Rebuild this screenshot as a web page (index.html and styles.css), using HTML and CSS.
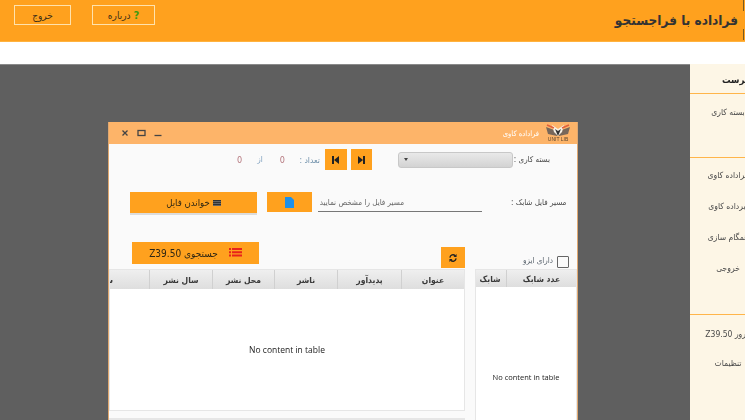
FILE: index.html
```html
<!DOCTYPE html>
<html lang="fa">
<head>
<meta charset="utf-8">
<title>فراداده با فراجستجو</title>
<link rel="stylesheet" href="styles.css">
</head>
<body>
<div class="page">
  <header class="header">
    <div class="header-actions">
      <button class="ghost-btn exit-btn">خروج</button>
      <button class="ghost-btn about-btn"><span class="q">?</span> درباره</button>
    </div>
    <div class="header-right">
      <h1 class="title">فراداده با فراجستجو</h1>
      <span class="edge"></span>
    </div>
  </header>
  <div class="strip"></div>
  <main class="main">
    <div class="desktop">
      <section class="window">
        <div class="titlebar">
          <div class="win-controls">
            <svg width="8" height="8" viewBox="0 0 8 8"><path d="M1.5 1.5l5 5M6.5 1.5l-5 5" stroke="#444" stroke-width="1.3"/></svg>
            <svg width="9" height="8" viewBox="0 0 9 8"><rect x="1" y="1.5" width="7" height="5" fill="none" stroke="#444" stroke-width="1.3"/></svg>
            <svg width="8" height="8" viewBox="0 0 8 8"><path d="M0.5 6.5h7" stroke="#444" stroke-width="1.3"/></svg>
          </div>
          <div class="win-title">
            <span>فراداده کاوی</span>
            <div class="logo">
              <svg width="24" height="13" viewBox="0 0 24 13"><path d="M0 3l11 4v5L2 10z" fill="#77675a"/><path d="M24 3l-11 4v5l9-2z" fill="#77675a"/><path d="M6 1l6 4 6-4-2 7-4 4-4-4z" fill="#f6f1e6"/><path d="M9 5l3 2 3-2-3 7z" fill="#333"/><path d="M1 1l7 3M23 1l-7 3" stroke="#e0603c" stroke-width="1.500"/></svg>
              <span class="logo-text">UNIT LIB</span>
            </div>
          </div>
        </div>
        <div class="win-body">
          <div class="row-pager">
            <span class="zero zero-a">0</span>
            <span class="lbl of">از</span>
            <span class="zero zero-b">0</span>
            <span class="lbl count">تعداد :</span>
            <button class="orange-btn pager-btn">
              <svg width="7" height="8" viewBox="0 0 7 8"><path d="M0 0h2v8H0zM7 0v8L2 4z" fill="#222"/></svg>
            </button>
            <button class="orange-btn pager-btn">
              <svg width="7" height="8" viewBox="0 0 7 8"><path d="M7 0H5v8h2zM0 0v8L5 4z" fill="#222"/></svg>
            </button>
            <div class="combo"><span class="combo-arrow"></span></div>
            <span class="lbl combo-lbl">بسته کاری :</span>
          </div>
          <div class="row-file">
            <button class="orange-btn read-btn"><span class="mini-grid"></span> خواندن فایل</button>
            <button class="orange-btn file-btn">
              <svg width="9" height="11" viewBox="0 0 9 11"><path d="M0 0h6l3 3v8H0z" fill="#1e90e8"/></svg>
            </button>
            <div class="path-input">مسیر فایل را مشخص نمایید</div>
            <span class="lbl path-lbl">مسیر فایل شابک :</span>
          </div>
          <div class="columns">
            <div class="col-main">
              <div class="col-main-tools">
                <button class="orange-btn search-btn">
                  <span class="search-text">جستجوی Z39.50</span>
                  <svg width="13" height="10" viewBox="0 0 13 10"><path d="M0 0h2v2H0zM3 0h10v2H3zM0 3.300h2v2H0zM3 3.300h10v2H3zM0 6.600h2v2H0zM3 6.600h10v2H3z" fill="#e8231a"/></svg>
                </button>
                <button class="orange-btn refresh-btn">
                  <svg width="8" height="8" viewBox="0 0 9 9"><path d="M1 4a3.500 3.500 0 0 1 6-2M8 5a3.500 3.500 0 0 1-6 2" fill="none" stroke="#222" stroke-width="1.500"/><path d="M8.500 0v3.500H5zM0.500 9V5.500H4z" fill="#222"/></svg>
                </button>
              </div>
              <div class="table table-main">
                <div class="thead">
                  <div class="th c-63">عنوان</div>
                  <div class="th c-64">پدیدآور</div>
                  <div class="th c-63">ناشر</div>
                  <div class="th c-62">محل نشر</div>
                  <div class="th c-63">سال نشر</div>
                  <div class="th c-rest">شابک</div>
                </div>
                <div class="tbody tbody-main">No content in table</div>
              </div>
              <div class="hscroll"></div>
            </div>
            <div class="col-side">
              <div class="check-row">
                <span class="check-box"></span>
                <span class="lbl">دارای ایزو</span>
              </div>
              <div class="table table-side">
                <div class="thead thead-side">
                  <div class="th c-70">عدد شابک</div>
                  <div class="th c-32">شابک</div>
                </div>
                <div class="tbody tbody-side">No content in table</div>
              </div>
            </div>
          </div>
        </div>
      </section>
    </div>
    <nav class="sidebar">
      <div class="side-group side-head"><b>فهرست</b></div>
      <div class="side-group group-a"><a>بسته کاری</a></div>
      <div class="side-group group-b">
        <a>فراداده کاوی</a><a>ابرداده کاوی</a><a>همگام سازی</a><a>خروجی</a>
      </div>
      <div class="side-group group-c">
        <a>مرور Z39.50</a><a>تنظیمات</a>
      </div>
    </nav>
  </main>
</div>
</body>
</html>
```
FILE: styles.css
```css
* { box-sizing: border-box; }
html, body { margin: 0; height: 100%; overflow: hidden; }
body { font-family: "DejaVu Sans Condensed", "DejaVu Sans", "Liberation Sans", sans-serif; background: #fff; color: #333; }
button { font-family: inherit; padding: 0; border: 0; cursor: default; }
.page { width: 745px; height: 420px; overflow: hidden; display: flex; flex-direction: column; filter: blur(0.25px); }

.header { height: 42px; flex: none; background: #ffa11e; border-bottom: 1px solid #ffb340; display: flex; justify-content: space-between; align-items: flex-start; padding: 5px 0 0 14px; }
.header-actions { display: flex; gap: 21px; }
.ghost-btn { height: 20px; background: transparent; border: 1.500px solid #ffe2ac; font-size: 10px; color: #3f3018; direction: rtl; }
.exit-btn { width: 57px; }
.about-btn { width: 63px; }
.q { color: #3f9a10; font-weight: bold; font-size: 11px; }
.header-right { display: flex; margin-top: -5px; height: 40px; }
.title { margin: 10px 5px 0 0; font-size: 13.500px; font-weight: bold; color: #333; direction: rtl; line-height: 20px; white-space: nowrap; }
.edge { width: 1px; margin-right: 1px; height: 40px; background: linear-gradient(#7a5a20 0 11px, transparent 11px 29px, #7a5a20 29px); }

.strip { height: 22px; flex: none; background: #fff; }

.main { flex: 1; display: flex; min-height: 0; }
.desktop { width: 690px; flex: none; background: #5f5f5f; position: relative; border-top: 1px solid #8a8a8a; overflow: hidden; }
.window { position: absolute; left: 108px; top: 57px; width: 470px; height: 330px; background: #fafafa; border: 1px solid #e0a870; border-top: 0; }

.titlebar { height: 22px; background: #fdb469; display: flex; justify-content: space-between; align-items: center; padding: 0 7px 0 12px; }
.win-controls { display: flex; gap: 8px; align-items: center; }
.win-title { display: flex; align-items: center; gap: 7px; font-size: 7.500px; color: #fff; direction: rtl; flex-direction: row-reverse; }
.logo { display: flex; flex-direction: column; align-items: center; width: 24px; }
.logo-text { font-family: "Liberation Sans", sans-serif; font-size: 5px; line-height: 5px; color: #5b4630; direction: ltr; white-space: nowrap; }

.win-body { display: flex; flex-direction: column; }
.lbl { font-size: 8px; color: #58626c; direction: rtl; white-space: nowrap; }
.orange-btn { background: #ffa11e; display: flex; align-items: center; justify-content: center; color: #2e2614; }

.row-pager { height: 21px; margin-top: 5px; display: flex; align-items: center; padding-left: 128px; }
.zero { font-size: 9px; color: #b5777e; }
.zero-a { margin-right: 15px; }
.of { color: #7a9cbc; margin-right: 17px; }
.zero-b { margin-right: 11px; }
.count { margin-right: 5px; color: #6f90aa; width: 24px; font-size: 8.500px; }
.pager-btn { width: 22px; height: 21px; margin-right: 4px; }
.pager-btn + .pager-btn { width: 21px; margin-right: 26px; }
.combo { width: 115px; height: 16px; border-radius: 3px; background: linear-gradient(#e9e9e9, #d3d3d3); border: 1px solid #c8c8c8; display: flex; align-items: center; padding-left: 5px; }
.combo-arrow { width: 0; height: 0; border: 2.500px solid transparent; border-top: 3px solid #444; border-bottom: 0; }
.combo-lbl { margin-left: 1px; color: #4a4a4a; }

.row-file { height: 24px; margin-top: 22px; display: flex; align-items: flex-start; padding-left: 21px; }
.read-btn { width: 127px; height: 21px; font-size: 9.500px; font-weight: normal; box-shadow: 0 2px 0 #dcdcdc; direction: rtl; gap: 3px; }
.mini-grid { width: 8px; height: 6px; background: repeating-linear-gradient(#333 0 1.500px, #666 1.500px 2px); display: inline-block; }
.file-btn { width: 45px; height: 20px; margin-left: 10px; }
.path-input { width: 164px; height: 20px; margin-left: 6px; border-bottom: 1px solid #777; font-size: 8px; color: #666; direction: rtl; padding: 6px 78px 0 0; text-align: right; white-space: nowrap; }
.path-lbl { margin-left: 29px; margin-top: 6px; color: #4a4a4a; }

.columns { display: flex; margin-top: 26px; align-items: flex-start; }
.col-main { width: 356px; }
.col-main-tools { height: 27px; display: flex; justify-content: space-between; padding-left: 23px; }
.search-btn { width: 127px; height: 22px; font-size: 10px; gap: 11px; }
.search-text { direction: rtl; }
.refresh-btn { width: 24px; height: 21px; margin-top: 5px; }
.col-side { width: 102px; margin-left: 10px; }
.check-row { height: 27px; display: flex; align-items: flex-start; flex-direction: row-reverse; gap: 4px; padding: 14px 8px 0 0; justify-content: flex-start; }
.check-box { width: 12px; height: 12px; border: 1.500px solid #666; border-radius: 1px; background: #fafafa; }

.table { background: #fff; border: 1px solid #e6e6e6; }
.thead { display: flex; flex-direction: row-reverse; height: 19px; background: linear-gradient(#efefef, #dedede); overflow: hidden; }
.thead-side { height: 17px; }
.th { font-size: 8.500px; font-weight: bold; color: #3a3a3a; display: flex; align-items: center; justify-content: center; border-left: 1px solid #d0d0d0; white-space: nowrap; direction: rtl; flex: none; overflow: hidden; }
.c-63 { width: 63px; }
.c-64 { width: 64px; }
.c-62 { width: 62px; }
.c-rest { width: 41px; justify-content: flex-start; padding-right: 36px; border-left: 0; }
.c-70 { width: 70px; }
.c-32 { width: 32px; border-left: 0; }
.tbody { display: flex; align-items: center; justify-content: center; font-family: "Open Sans", "Liberation Sans", sans-serif; color: #222; }
.tbody-main { height: 121px; font-size: 8.500px; }
.tbody-side { height: 180px; font-size: 7.500px; }
.hscroll { height: 8px; margin-top: 7px; background: #e6e6e6; }

.sidebar { flex: 1; background: #fdf6e6; overflow: hidden; min-width: 0; direction: rtl; }
.side-group { width: 76px; margin-right: -21px; text-align: center; border-bottom: 1.500px solid #ffb54a; font-size: 8.500px; color: #4a4a4a; }
.side-group a { display: block; white-space: nowrap; height: 31px; }
.side-head { height: 30px; color: #222; font-size: 9.500px; padding: 10px 0 0 22px; white-space: nowrap; }
.group-a { height: 64px; padding-top: 13px; }
.group-b { height: 157px; padding-top: 12px; }
.group-c { border-bottom: 0; padding-top: 14px; }
.group-c a { height: 29px; }
```
